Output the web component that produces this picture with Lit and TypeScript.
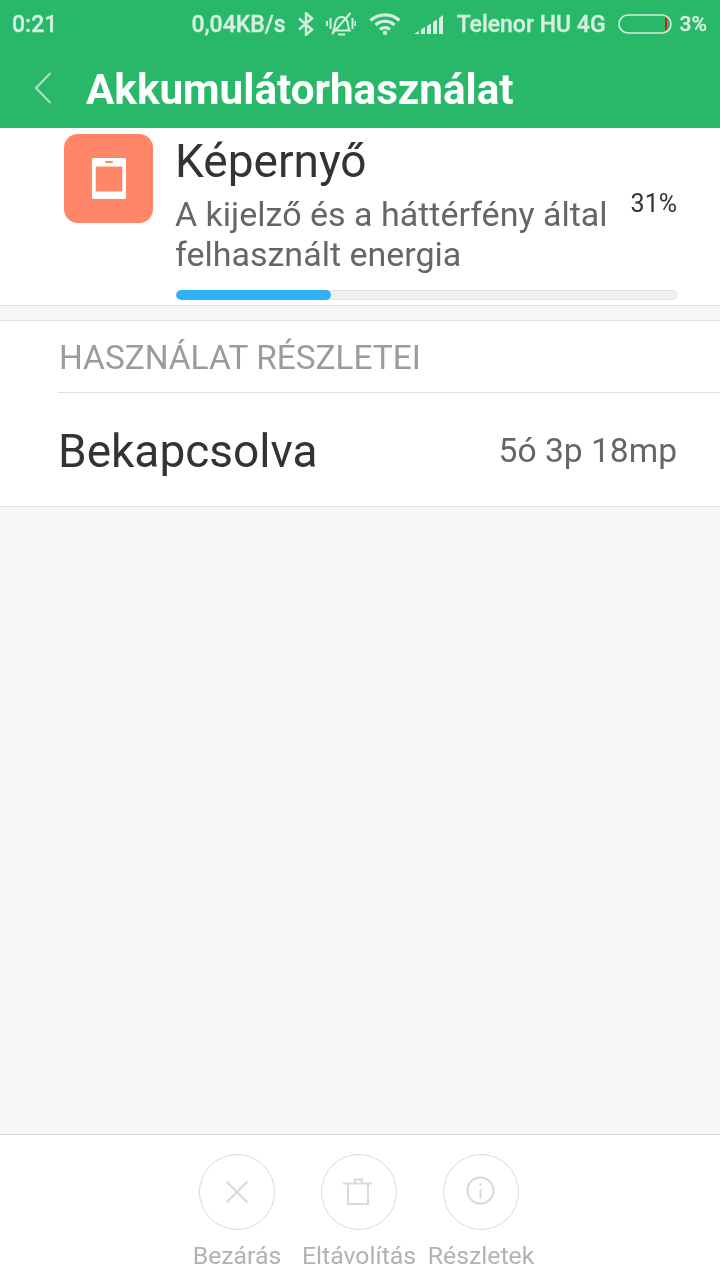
import { LitElement, html, css, svg } from 'lit';
import { customElement } from 'lit/decorators.js';

const closeIcon = svg`<path d="M27.500 27.500l21 21M48.500 27.500l-21 21"/>`;
const trashIcon = svg`<path d="M22 29.500h29M27 29.500V50h20V29.500M34 29v-3.500h7V29"/>`;
const infoIcon = svg`<circle cx="37.500" cy="36.500" r="13"/><path d="M37.500 35v9.500M37.500 29.500v2.400"/>`;

@customElement('app-root')
export class AppRoot extends LitElement {
	static styles = css`
		:host {
			display: block;
			width: 720px;
			height: 1280px;
			font-family: Roboto, 'Liberation Sans', sans-serif;
			background: #f7f7f7;
		}

		.page {
			display: flex;
			flex-direction: column;
			height: 1280px;
			/* own layer, so text is antialiased in grey as on the phone */
			will-change: transform;
		}

		.top {
			background: #29b769;
			height: 128px;
			flex: none;
		}

		.status {
			display: flex;
			align-items: center;
			height: 48px;
			padding: 0 13px 0 12px;
			color: #d5f0e1;
			font-size: 23px;
			font-weight: 500;
			-webkit-text-stroke: 0.3px #d5f0e1;
		}

		.status .time {
			flex: 1;
		}

		.status svg {
			display: block;
			flex: none;
		}

		.speed {
			margin-right: 12px;
		}

		.carrier {
			margin: 0 12px 0 13px;
		}

		.level {
			font-size: 21px;
		}

		.title-row {
			display: flex;
			align-items: center;
			height: 80px;
			box-sizing: border-box;
		}

		.back {
			display: block;
			margin-left: 34px;
			margin-right: 34px;
		}

		.title {
			color: #fff;
			font-size: 42.200px;
			font-weight: 700;
			padding-top: 3px;
		}

		.app-card {
			display: flex;
			background: #fff;
			height: 178px;
			box-sizing: border-box;
			border-bottom: 1px solid #e0e0e0;
			padding: 6px 43px 0 64px;
			flex: none;
		}

		.app-icon {
			width: 89px;
			height: 89px;
			border-radius: 14px;
			background: #ff8669;
			display: flex;
			align-items: center;
			justify-content: center;
			flex: none;
			margin-right: 23px;
		}

		.app-body {
			flex: 1;
			min-width: 0;
		}

		.app-name {
			color: #333;
			font-size: 46px;
			line-height: 54px;
			margin-left: -1px;
		}

		.app-row {
			display: flex;
			justify-content: space-between;
		}

		.app-desc {
			color: #666;
			font-size: 34px;
			line-height: 40px;
			width: 445px;
			margin: 6px 0 0 -1px;
		}

		.pct {
			color: #333;
			font-size: 25px;
			margin-top: 1px;
		}

		.bar {
			height: 10px;
			margin-top: 16px;
			border-radius: 5px;
			background: #f0f0f0;
			box-shadow: inset 0 0 0 1px #e2e2e2;
			overflow: hidden;
		}

		.bar-fill {
			height: 100%;
			border-radius: 5px;
			background: #2fb0f8;
		}

		.details {
			background: #fff;
			margin-top: 14px;
			border-top: 1px solid #e2e2e2;
			border-bottom: 1px solid #e2e2e2;
			padding-left: 58px;
			flex: none;
		}

		.details-head {
			height: 71px;
			line-height: 74px;
			color: #9b9b9b;
			font-size: 33.400px;
			padding-left: 1px;
			border-bottom: 1px solid #e0e0e0;
		}

		.details-row {
			display: flex;
			justify-content: space-between;
			align-items: center;
			height: 113px;
			padding-top: 1px;
			box-sizing: border-box;
			padding-right: 43px;
		}

		.on-label {
			color: #333;
			font-size: 46px;
			padding-top: 2px;
		}

		.on-value {
			color: #666;
			font-size: 33.600px;
		}

		.spacer {
			flex: 1;
		}

		.actions {
			background: #fff;
			border-top: 1px solid #d9d9d9;
			height: 146px;
			box-sizing: border-box;
			display: flex;
			justify-content: center;
			gap: 46px;
			padding: 19px 2px 0 0;
			flex: none;
		}

		.action {
			display: flex;
			flex-direction: column;
			align-items: center;
			width: 76px;
		}

		.action svg {
			display: block;
			fill: none;
			stroke: #d9d9d9;
			stroke-width: 2;
		}

		.action svg .ring {
			stroke-width: 1;
		}

		.action span {
			color: #b2b2b2;
			font-size: 24.800px;
			line-height: 28px;
			margin-top: 12px;
			white-space: nowrap;
		}
	`;

	render() {
		return html`
			<div class="page">
				<div class="top">
					<div class="status">
						<span class="time">0:21</span>
						<span class="speed">0,04KB/s</span>
						<svg width="16" height="24" viewBox="0 0 16 24" fill="none" stroke="#d5f0e1" stroke-width="2.400">
							<path d="M1 6.500l13 11-6 5.500V1l6 5.500-13 11" />
						</svg>
						<svg width="30" height="24" viewBox="0 0 30 24" fill="none" stroke="#d5f0e1" stroke-width="2" style="margin-left:12px">
							<path d="M7.500 18.500c1.500-2.500 1-6 2-8.500 1-3 3.500-5 6-5s5 2 6 5c.7 2.500.5 6 2 8.500H6.500zM12 22.500h7M4.500 6v11M1 9v5M26.500 6v11M29.500 9v5M6 22L24.500 1" />
						</svg>
						<svg width="32" height="22" viewBox="0 0 32 22" fill="none" stroke="#d5f0e1" stroke-width="3.200" style="margin-left:13px">
							<path d="M1.500 7.500c8-7.500 21-7.500 29 0M6.500 12c5.500-5 13.500-5 19 0M11 16.500c3-2.500 7-2.500 10 0" />
							<circle cx="16" cy="19.800" r="2.200" fill="#d5f0e1" stroke="none" />
						</svg>
						<svg width="30" height="20" viewBox="0 0 30 20" fill="#d5f0e1" style="margin-left:13px">
							<path d="M0 20l5-3v3zM7 15.500l4-2.500v7H7zM13 12l4-2.500V20h-4zM19 8l4-2.500V20h-4zM25 4l4-3v19h-4z" />
						</svg>
						<span class="carrier">Telenor HU 4G</span>
						<svg width="54" height="20" viewBox="0 0 54 20" style="margin-right:8px">
							<rect x="1" y="1" width="52" height="18" rx="9" fill="none" stroke="#d5f0e1" stroke-width="1.600" />
							<rect x="47" y="4" width="2" height="12" fill="#d81e1e" />
						</svg>
						<span class="level">3%</span>
					</div>
					<div class="title-row">
						<svg class="back" width="18" height="32" viewBox="0 0 18 32" fill="none" stroke="#a5e2c0" stroke-width="2.200">
							<path d="M16.500 1L2 16l14.500 15" />
						</svg>
						<span class="title">Akkumulátorhasználat</span>
					</div>
				</div>
				<div class="app-card">
					<div class="app-icon">
						<svg width="34" height="41" viewBox="0 0 34 41">
							<path fill="#fff" fill-rule="evenodd" d="M1.500 0h31A1.500 1.500 0 0 1 34 1.500v38a1.500 1.500 0 0 1-1.500 1.500h-31A1.500 1.500 0 0 1 0 39.500v-38A1.500 1.500 0 0 1 1.500 0zM3.700 8.600v25h26.600v-25z" />
							<rect x="13" y="3" width="8" height="2" rx="1" fill="#ff8669" />
						</svg>
					</div>
					<div class="app-body">
						<div class="app-name">Képernyő</div>
						<div class="app-row">
							<div class="app-desc">A kijelző és a háttérfény által felhasznált energia</div>
							<div class="pct">31%</div>
						</div>
						<div class="bar"><div class="bar-fill" style="width:31%"></div></div>
					</div>
				</div>
				<div class="details">
					<div class="details-head">HASZNÁLAT RÉSZLETEI</div>
					<div class="details-row">
						<span class="on-label">Bekapcsolva</span>
						<span class="on-value">5ó 3p 18mp</span>
					</div>
				</div>
				<div class="spacer"></div>
				<div class="actions">
					<div class="action">
						<svg width="76" height="76" viewBox="0 0 76 76">
							<circle class="ring" cx="38" cy="38" r="37.500" />
							${closeIcon}
						</svg>
						<span>Bezárás</span>
					</div>
					<div class="action">
						<svg width="76" height="76" viewBox="0 0 76 76">
							<circle class="ring" cx="38" cy="38" r="37.500" />
							${trashIcon}
						</svg>
						<span>Eltávolítás</span>
					</div>
					<div class="action">
						<svg width="76" height="76" viewBox="0 0 76 76">
							<circle class="ring" cx="38" cy="38" r="37.500" />
							${infoIcon}
						</svg>
						<span>Részletek</span>
					</div>
				</div>
			</div>
		`;
	}
}
